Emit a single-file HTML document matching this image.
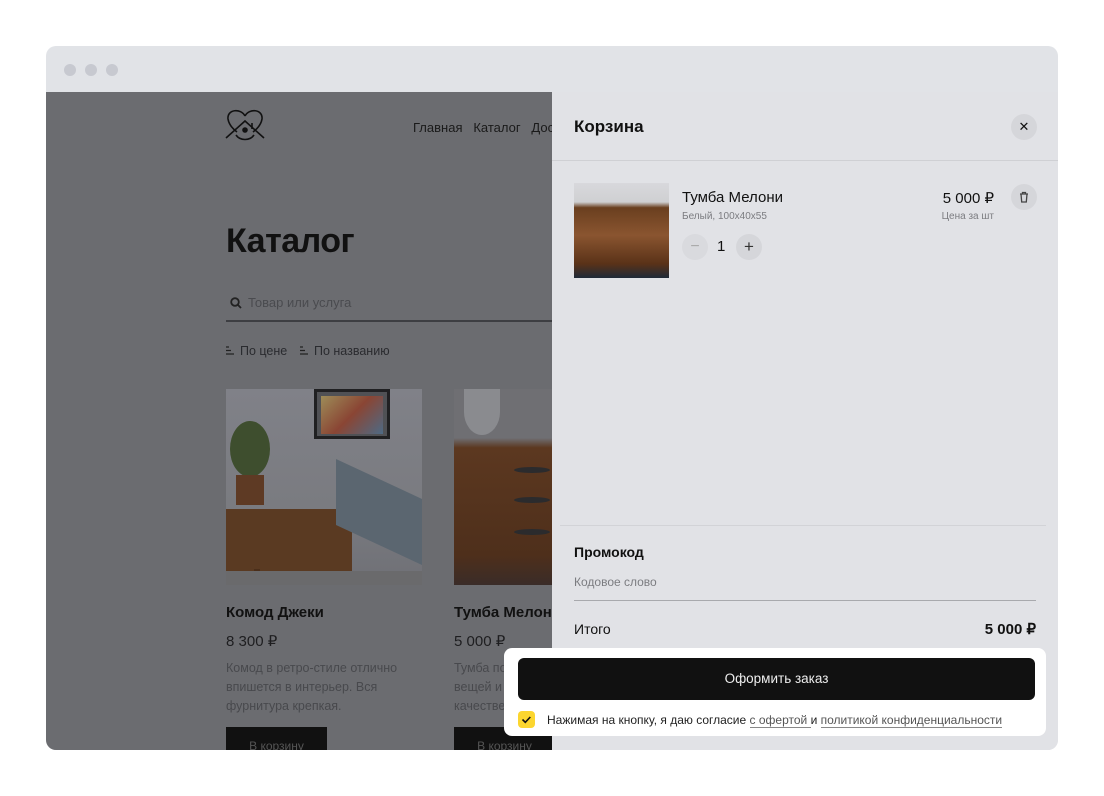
<!DOCTYPE html>
<html><head><meta charset="utf-8"><style>
*{margin:0;padding:0;box-sizing:border-box}
body{width:1104px;height:796px;background:#fff;font-family:"Liberation Sans",sans-serif;position:relative;overflow:hidden}
.abs{position:absolute}
.frame{left:46px;top:46px;width:1012px;height:704px;border-radius:10px;background:#e1e3e7;overflow:hidden}
.dot{width:12px;height:12px;border-radius:50%;background:#c7c9d0;top:18px}
.left{left:0;top:46px;width:506px;height:658px;background:#6b6c70;overflow:hidden}
.drawer{left:506px;top:46px;width:506px;height:658px;background:#e1e2e6}
.t{color:#111}
</style></head><body>
<div class="abs frame">
 <div class="abs dot" style="left:18px"></div><div class="abs dot" style="left:39px"></div><div class="abs dot" style="left:60px"></div>
 <div class="abs left">
  <svg class="abs" style="left:179px;top:16px" width="40" height="36" viewBox="0 0 40 36" fill="none" stroke="#111" stroke-width="1.6"><path d="M20 8C16 0 2 1 3 11c1 6 5 10 9 13"/><path d="M20 8C24 0 38 1 37 11c-1 6-5 10-9 13"/><path d="M1 30L20 13l19 17"/><path d="M11 27c4 6 14 6 18 0"/><circle cx="20" cy="22" r="2" fill="#111"/><path d="M27 15v6"/></svg>
  <div class="abs t" style="left:367px;top:28px;font-size:13px;color:#1a1a1a">Главная&nbsp;&nbsp;&nbsp;Каталог&nbsp;&nbsp;&nbsp;Дос</div>
  <div class="abs t" style="left:180px;top:130px;font-size:34px;font-weight:bold;letter-spacing:-.5px">Каталог</div>
  <svg class="abs" style="left:184px;top:205px" width="12" height="12" viewBox="0 0 12 12" fill="none" stroke="#222" stroke-width="1.8"><circle cx="5" cy="5" r="3.8"/><path d="M8 8l3 3"/></svg>
  <div class="abs" style="left:202px;top:203px;font-size:13px;color:#4a4b4f">Товар или услуга</div>
  <div class="abs" style="left:180px;top:228px;width:330px;height:2px;background:#3d3e42"></div>
  <svg class="abs" style="left:180px;top:254px" width="9" height="9" viewBox="0 0 9 9" stroke="#222" stroke-width="1.2"><path d="M0 1h3M0 4.5h5M0 8h8"/></svg>
  <div class="abs" style="left:194px;top:252px;font-size:12.5px;color:#2a2b2f">По цене</div>
  <svg class="abs" style="left:254px;top:254px" width="9" height="9" viewBox="0 0 9 9" stroke="#222" stroke-width="1.2"><path d="M0 1h3M0 4.5h5M0 8h8"/></svg>
  <div class="abs" style="left:268px;top:252px;font-size:12.5px;color:#2a2b2f">По названию</div>
  <div class="abs" style="left:180px;top:297px;width:196px;height:196px;background:linear-gradient(#808188 0,#7a7b80 60%,#6f7076 100%);overflow:hidden">
    <div class="abs" style="left:88px;top:0;width:76px;height:50px;background:#505155;border:3px solid #202022"><div style="margin:4px;height:38px;background:linear-gradient(135deg,#9d8c58,#8a4534 50%,#4d6a85)"></div></div>
    <div class="abs" style="left:0;top:120px;width:126px;height:62px;background:#5a3a22"></div>
    <div class="abs" style="left:28px;top:180px;width:6px;height:16px;background:#4a2e1a"></div>
    <div class="abs" style="left:4px;top:32px;width:40px;height:56px;border-radius:50%;background:#3e4e2e"></div>
    <div class="abs" style="left:10px;top:86px;width:28px;height:30px;background:#5e3a24"></div>
    <div class="abs" style="left:110px;top:90px;width:86px;height:66px;background:#5b6670;transform:skewY(25deg)"></div>
    <div class="abs" style="left:0;top:182px;width:196px;height:14px;background:#6a6a6c"></div>
  </div>
  <div class="abs" style="left:408px;top:297px;width:98px;height:196px;background:linear-gradient(#6f6f73 0,#6f6f73 25%,#5c3820 30%,#4e2f1b 85%,#3a2c28 100%);overflow:hidden">
    <div class="abs" style="left:10px;top:0;width:36px;height:46px;border-radius:0 0 50% 50%;background:#8a8b8f"></div>
    <div class="abs" style="left:60px;top:78px;width:36px;height:6px;border-radius:50%;background:#2b2b2d"></div>
    <div class="abs" style="left:60px;top:108px;width:36px;height:6px;border-radius:50%;background:#2b2b2d"></div>
    <div class="abs" style="left:60px;top:140px;width:36px;height:6px;border-radius:50%;background:#2b2b2d"></div>
  </div>
  <div class="abs t" style="left:180px;top:512px;font-size:15px;font-weight:bold">Комод Джеки</div>
  <div class="abs t" style="left:408px;top:512px;font-size:15px;font-weight:bold;white-space:nowrap">Тумба Мелони</div>
  <div class="abs" style="left:180px;top:540px;font-size:15px;color:#1e1e20">8 300 ₽</div>
  <div class="abs" style="left:408px;top:540px;font-size:15px;color:#1e1e20">5 000 ₽</div>
  <div class="abs" style="left:180px;top:567px;font-size:12.5px;line-height:19px;color:#48494d">Комод в ретро-стиле отлично<br>впишется в интерьер. Вся<br>фурнитура крепкая.</div>
  <div class="abs" style="left:408px;top:567px;font-size:12.5px;line-height:19px;color:#48494d;white-space:nowrap">Тумба по<br>вещей и<br>качестве</div>
  <div class="abs" style="left:180px;top:635px;width:101px;height:30px;background:#111;color:#555;font-size:12px;text-align:center;padding-top:12px">В корзину</div>
  <div class="abs" style="left:408px;top:635px;width:101px;height:30px;background:#111;color:#555;font-size:12px;text-align:center;padding-top:12px">В корзину</div>
 </div>
 <div class="abs drawer">
  <div class="abs t" style="left:22px;top:25px;font-size:17px;font-weight:bold">Корзина</div>
  <div class="abs" style="left:459px;top:22px;width:26px;height:26px;border-radius:50%;background:#d5d6da;text-align:center;font-size:13px;line-height:26px;color:#111">✕</div>
  <div class="abs" style="left:0;top:68px;width:506px;height:1px;background:#cfd0d4"></div>
  <div class="abs" style="left:22px;top:91px;width:95px;height:95px;background:linear-gradient(#d8d8dc 0,#cfd0d2 20%,#6a3f1f 26%,#8a5530 55%,#5a3218 85%,#1f2a38 100%)"></div>
  <div class="abs t" style="left:130px;top:97px;font-size:15px">Тумба Мелони</div>
  <div class="abs" style="left:130px;top:119px;font-size:10px;color:#7b7c80">Белый, 100x40x55</div>
  <div class="abs" style="left:130px;top:142px;width:26px;height:26px;border-radius:50%;background:#d9dade;text-align:center;line-height:25px;color:#aaa;font-size:16px">−</div>
  <div class="abs t" style="left:165px;top:146px;font-size:15px">1</div>
  <div class="abs" style="left:184px;top:142px;width:26px;height:26px;border-radius:50%;background:#d5d6da;text-align:center;line-height:25px;color:#333;font-size:17px">+</div>
  <div class="abs t" style="left:378px;top:97px;font-size:15px;width:64px;text-align:right">5 000 ₽</div>
  <div class="abs" style="left:378px;top:119px;font-size:10px;color:#7b7c80;width:64px;text-align:right">Цена за шт</div>
  <div class="abs" style="left:459px;top:92px;width:26px;height:26px;border-radius:50%;background:#d5d6da"><svg style="margin:7px 8px" width="10" height="12" viewBox="0 0 10 12" fill="none" stroke="#444" stroke-width="1.3"><path d="M1 3h8M3.5 3V1.5h3V3M2 3l.7 8h4.6L8 3"/></svg></div>
  <div class="abs" style="left:8px;top:433px;width:486px;height:1px;background:#d2d3d7"></div>
  <div class="abs t" style="left:22px;top:452px;font-size:14px;font-weight:bold">Промокод</div>
  <div class="abs" style="left:22px;top:483px;font-size:12px;color:#7b7c80">Кодовое слово</div>
  <div class="abs" style="left:22px;top:508px;width:462px;height:1px;background:#a8a9ad"></div>
  <div class="abs t" style="left:22px;top:529px;font-size:14px">Итого</div>
  <div class="abs t" style="left:384px;top:528px;width:100px;text-align:right;font-size:15px;font-weight:bold">5 000 ₽</div>
 </div>
 <div class="abs" style="left:458px;top:602px;width:542px;height:88px;background:#fff;border-radius:8px">
  <div class="abs" style="left:14px;top:10px;width:517px;height:42px;background:#111;border-radius:6px;color:#eee;font-size:13.5px;text-align:center;line-height:42px">Оформить заказ</div>
  <div class="abs" style="left:14px;top:63px;width:17px;height:17px;border-radius:4px;background:#fcd62f"><svg width="17" height="17" viewBox="0 0 17 17" fill="none" stroke="#111" stroke-width="1.6"><path d="M4.5 8.5l2.8 2.8 5-5.3"/></svg></div>
  <div class="abs" style="left:43px;top:65px;font-size:12px;color:#222;white-space:nowrap">Нажимая на кнопку, я даю согласие <span style="color:#555;border-bottom:1px solid #888">с офертой </span> и <span style="color:#555;border-bottom:1px solid #888">политикой конфиденциальности</span></div>
 </div>
</div>
</body></html>
